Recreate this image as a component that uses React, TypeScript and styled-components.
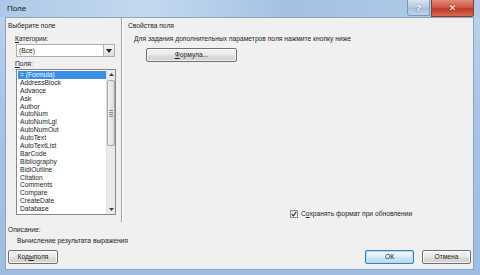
import React from "react";
import styled, { createGlobalStyle } from "styled-components";

const Global = createGlobalStyle`
  html, body { margin: 0; padding: 0; background: #ffffff; }
  body { font-family: "Liberation Sans", "DejaVu Sans", sans-serif; font-size: 6.7px; color: #1e1e1e; }
  * { box-sizing: border-box; }
`;

const Window = styled.div`
  width: 480px;
  height: 275px;
  display: flex;
  flex-direction: column;
  background: linear-gradient(180deg, #bcd3ec 0%, #a9c4e4 40%, #9fbde0 100%);
  padding: 0 6px 5px 5px;
  overflow: hidden;
`;

const TitleBar = styled.div`
  height: 17px;
  display: flex;
  align-items: flex-start;
  margin: 0 -6px 0 -5px;
  padding-left: 7px;
  background: linear-gradient(90deg, #adc8e7 0%, #c4d9ef 30%, #a4c1e4 60%, #b3cbe8 100%);
`;

const Title = styled.div`
  flex: 1;
  font-size: 8px;
  line-height: 17px;
  color: #1a1a1a;
`;

const CaptionButton = styled.div<{ $close?: boolean }>`
  width: ${(p) => (p.$close ? "43px" : "23px")};
  height: ${(p) => (p.$close ? "17px" : "16px")};
  display: flex;
  align-items: center;
  justify-content: center;
  color: #ffffff;
  font-size: 9px;
  font-weight: bold;
  border: 1px solid ${(p) => (p.$close ? "#8c3a33" : "#7d97b8")};
  border-top: none;
  border-radius: 0 0 ${(p) => (p.$close ? "3px 0" : "0 3px")};
  background: ${(p) =>
    p.$close
      ? "linear-gradient(180deg, #e08a78 0%, #cf5a48 45%, #c0392b 55%, #d86a52 100%)"
      : "linear-gradient(180deg, #d6e4f3 0%, #b8cde6 45%, #a6c0e0 55%, #bcd2ea 100%)"};
  text-shadow: 0 0 2px rgba(0, 0, 0, 0.5);
  margin-right: ${(p) => (p.$close ? "6px" : "1px")};
`;

const Client = styled.div`
  flex: 1;
  display: flex;
  flex-direction: column;
  background: #f0f0f0;
  border: 1px solid #8ca4c2;
`;

const Top = styled.div`
  height: 204px;
  display: flex;
`;

const LeftPanel = styled.div`
  width: 115px;
  display: flex;
  flex-direction: column;
  padding: 3px 0 0 2px;
`;

const Separator = styled.div`
  width: 2px;
  border-left: 1px solid #a0a0a0;
  border-right: 1px solid #ffffff;
`;

const RightPanel = styled.div`
  flex: 1;
  display: flex;
  flex-direction: column;
  padding: 3px 0 0 5px;
`;

const Heading = styled.div`
  line-height: 9px;
  height: 9px;
`;

const Label = styled.div<{ $indent?: number; $top?: number }>`
  line-height: 9px;
  height: 9px;
  white-space: nowrap;
  margin-left: ${(p) => p.$indent ?? 0}px;
  margin-top: ${(p) => p.$top ?? 0}px;
`;

const U = styled.span`
  text-decoration: underline;
`;

const Combo = styled.div`
  margin: 1px 0 0 8px;
  width: 99px;
  height: 13px;
  display: flex;
  align-items: center;
  background: #ffffff;
  border: 1px solid #abadb3;
  padding-left: 2px;
`;

const ComboText = styled.div`
  flex: 1;
  line-height: 11px;
`;

const DropBtn = styled.div`
  width: 11px;
  height: 11px;
  display: flex;
  align-items: center;
  justify-content: center;
  background: linear-gradient(180deg, #f4f4f4, #dcdcdc);
  border-left: 1px solid #b5b5b5;
`;

const ListBox = styled.div`
  margin: 1px 0 0 8px;
  width: 100px;
  height: 146px;
  display: flex;
  background: #ffffff;
  border: 1px solid #828790;
`;

const Items = styled.div`
  flex: 1;
  padding: 1px 0 0 1px;
  overflow: hidden;
`;

const Item = styled.div<{ $sel?: boolean }>`
  height: 7.9px;
  line-height: 7.9px;
  padding-left: 2px;
  white-space: nowrap;
  background: ${(p) => (p.$sel ? "#3a8ee6" : "transparent")};
  color: ${(p) => (p.$sel ? "#ffffff" : "#1e1e1e")};
`;

const ScrollBar = styled.div`
  width: 9px;
  display: flex;
  flex-direction: column;
  background: #eaeaea;
  border-left: 1px solid #e0e0e0;
`;

const ScrollArrow = styled.div`
  height: 9px;
  display: flex;
  align-items: center;
  justify-content: center;
`;

const Thumb = styled.div`
  height: 66px;
  margin: 1px 0;
  border: 1px solid #a5a5a5;
  border-radius: 2px;
  background: linear-gradient(90deg, #f2f2f2, #dadada);
  display: flex;
  flex-direction: column;
  align-items: center;
  justify-content: center;
  gap: 1px;
`;

const Grip = styled.div`
  width: 4px;
  height: 1px;
  background: #8a8a8a;
`;

const Track = styled.div`
  flex: 1;
`;

const Button = styled.div<{ $w: number; $default?: boolean }>`
  width: ${(p) => p.$w}px;
  height: 14px;
  display: flex;
  align-items: center;
  justify-content: center;
  border: 1px solid ${(p) => (p.$default ? "#3c7fb1" : "#707070")};
  border-radius: 2px;
  background: ${(p) =>
    p.$default
      ? "linear-gradient(180deg, #f0f8fd 0%, #e3f0fa 45%, #cbe4f6 55%, #bcdcf3 100%)"
      : "linear-gradient(180deg, #f2f2f2 0%, #ebebeb 45%, #dddddd 55%, #cfcfcf 100%)"};
  box-shadow: inset 0 0 0 1px ${(p) => (p.$default ? "#a9dcf7" : "rgba(255,255,255,0.7)")};
  line-height: 12px;
  white-space: nowrap;
`;

const FormulaRow = styled.div`
  margin: 5px 0 0 18px;
`;

const Spacer = styled.div`
  flex: 1;
`;

const CheckRow = styled.div`
  display: flex;
  align-items: center;
  gap: 3px;
  margin: 0 0 4px 162px;
  line-height: 9px;
`;

const Check = styled.div`
  width: 8px;
  height: 8px;
  border: 1px solid #8f8f8f;
  background: linear-gradient(135deg, #dcdcdc, #fafafa);
  display: flex;
  align-items: center;
  justify-content: center;
`;

const Bottom = styled.div`
  flex: 1;
  display: flex;
  flex-direction: column;
  padding: 3px 2px 5px 2px;
`;

const ButtonRow = styled.div`
  margin-top: auto;
  display: flex;
  gap: 8px;
`;

const items = [
  "= (Formula)",
  "AddressBlock",
  "Advance",
  "Ask",
  "Author",
  "AutoNum",
  "AutoNumLgl",
  "AutoNumOut",
  "AutoText",
  "AutoTextList",
  "BarCode",
  "Bibliography",
  "BidiOutline",
  "Citation",
  "Comments",
  "Compare",
  "CreateDate",
  "Database",
];

export default function App() {
  return (
    <>
      <Global />
      <Window>
        <TitleBar>
          <Title>Поле</Title>
          <CaptionButton>?</CaptionButton>
          <CaptionButton $close>✕</CaptionButton>
        </TitleBar>
        <Client>
          <Top>
            <LeftPanel>
              <Heading>Выберите поле</Heading>
              <Label $indent={7} $top={4}>
                <U>К</U>атегории:
              </Label>
              <Combo>
                <ComboText>(Все)</ComboText>
                <DropBtn>
                  <svg width="6" height="4" viewBox="0 0 6 4">
                    <path d="M0 0 H6 L3 4 Z" fill="#222" />
                  </svg>
                </DropBtn>
              </Combo>
              <Label $indent={7} $top={2}>
                <U>П</U>оля:
              </Label>
              <ListBox>
                <Items>
                  {items.map((it, i) => (
                    <Item key={it} $sel={i === 0}>
                      {it}
                    </Item>
                  ))}
                </Items>
                <ScrollBar>
                  <ScrollArrow>
                    <svg width="5" height="3" viewBox="0 0 5 3">
                      <path d="M0 3 H5 L2.5 0 Z" fill="#444" />
                    </svg>
                  </ScrollArrow>
                  <Thumb>
                    <Grip />
                    <Grip />
                    <Grip />
                    <Grip />
                  </Thumb>
                  <Track />
                  <ScrollArrow>
                    <svg width="5" height="3" viewBox="0 0 5 3">
                      <path d="M0 0 H5 L2.5 3 Z" fill="#444" />
                    </svg>
                  </ScrollArrow>
                </ScrollBar>
              </ListBox>
            </LeftPanel>
            <Separator />
            <RightPanel>
              <Heading>Свойства поля</Heading>
              <Label $indent={6} $top={4}>
                Для задания дополнительных параметров поля нажмите кнопку ниже
              </Label>
              <FormulaRow>
                <Button $w={91}>
                  <U>Ф</U>ормула...
                </Button>
              </FormulaRow>
              <Spacer />
              <CheckRow>
                <Check>
                  <svg width="6" height="6" viewBox="0 0 6 6">
                    <path d="M0.8 3.2 L2.4 4.8 L5.3 0.8" stroke="#2a2a2a" strokeWidth="1.1" fill="none" />
                  </svg>
                </Check>
                <span>
                  С<U>о</U>хранять формат при обновлении
                </span>
              </CheckRow>
            </RightPanel>
          </Top>
          <Bottom>
            <Label>Описание:</Label>
            <Label $indent={9} $top={2}>
              Вычисление результата выражения
            </Label>
            <ButtonRow>
              <Button $w={50}>
                Код<U>ы</U> поля
              </Button>
              <Spacer />
              <Button $w={49} $default>
                ОК
              </Button>
              <Button $w={49}>Отмена</Button>
            </ButtonRow>
          </Bottom>
        </Client>
      </Window>
    </>
  );
}
